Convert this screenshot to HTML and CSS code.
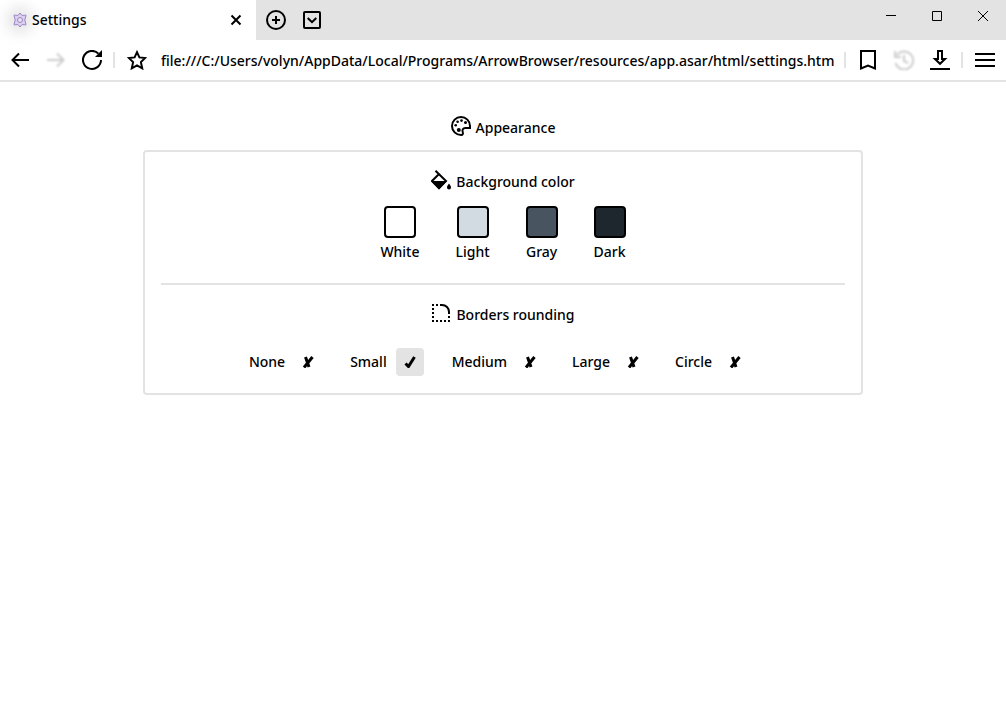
FILE: index.html
```
<!DOCTYPE html>
<html lang="en">
<head>
<meta charset="utf-8">
<title>Settings</title>
<link rel="stylesheet" href="styles.css">
</head>
<body>
<header class="titlebar">
  <div class="tab">
    <svg class="favicon" viewBox="0 0 16 16"><path d="M8 1l2 2.400 4.200-.4-1.400 5 1.400 5-4.200-.4L8 15l-2-2.400-4.200.4 1.400-5-1.400-5 4.200.400z" fill="#dcd0f0" stroke="#9c86c0"/><circle cx="8" cy="8" r="2.500" fill="#e6e0f2" stroke="#9c86c0"/></svg>
    <span class="tab-title">Settings</span>
    <button class="tab-close" aria-label="Close tab"><svg viewBox="0 0 20 20"><path d="M5.500 5.500l9 9M14.500 5.500l-9 9"/></svg></button>
  </div>
  <button class="strip-btn" aria-label="New tab"><svg viewBox="0 0 20 20"><circle cx="10" cy="10" r="9"/><path d="M10 6v8M6 10h8"/></svg></button>
  <button class="strip-btn" aria-label="Tab list"><svg viewBox="0 0 20 20"><rect x="2" y="2" width="16" height="16" rx="1"/><path d="M5.700 8l4.300 4.200L14.300 8"/></svg></button>
  <div class="window-controls">
    <button class="win-btn" aria-label="Minimize"><svg viewBox="0 0 10 10"><path d="M0 4.500h10"/></svg></button>
    <button class="win-btn" aria-label="Maximize"><svg viewBox="0 0 10 10"><path d="M.5.5h9v9h-9z"/></svg></button>
    <button class="win-btn" aria-label="Close"><svg viewBox="0 0 10 10"><path d="M0 0l10 10M10 0L0 10"/></svg></button>
  </div>
</header>
<nav class="toolbar">
  <button class="icon-btn" aria-label="Back"><svg viewBox="0 0 20 20"><path d="M19 10H3M9 3.500L2.500 10 9 16.500"/></svg></button>
  <button class="icon-btn" aria-label="Forward" disabled><svg viewBox="0 0 20 20"><path d="M1 10h16M11 3.500l6.500 6.500-6.500 6.500"/></svg></button>
  <button class="icon-btn" aria-label="Reload"><svg viewBox="0 0 20 20"><path d="M16.400 3.600A9 9 0 1 0 19 10"/><path class="solid" d="M20 0v7h-7z"/></svg></button>
  <span class="separator"></span>
  <button class="icon-btn" aria-label="Add bookmark"><svg viewBox="0 0 20 20"><path d="M10 2.200l2.400 5.200 5.600.7-4.100 4 1.300 6.200-5.200-3-5.200 3 1.300-6.200L2 8.100l5.600-.7z"/></svg></button>
  <input class="address" type="text" aria-label="Address" value="file:///C:/Users/volyn/AppData/Local/Programs/ArrowBrowser/resources/app.asar/html/settings.html">
  <span class="separator"></span>
  <button class="icon-btn" aria-label="Bookmarks"><svg viewBox="0 0 20 20"><path d="M3 1h14v17.500l-7-3-7 3z"/></svg></button>
  <button class="icon-btn" aria-label="History" disabled><svg viewBox="0 0 20 20"><path d="M3 5a9 9 0 1 1-1.500 8M1 1v6h6M10 5v6l4 2"/></svg></button>
  <button class="icon-btn" aria-label="Downloads"><svg viewBox="0 0 20 20"><path d="M8 1h4v8h3l-5 4.800L5 9h3zM0 19h20"/></svg></button>
  <span class="separator"></span>
  <button class="icon-btn" aria-label="Menu"><svg viewBox="0 0 20 20"><path d="M0 4h20M0 10h20M0 16h20"/></svg></button>
</nav>
<main class="page">
  <h1 class="heading"><svg viewBox="0 0 20 20"><path d="M10 1a9 9 0 1 0 0 18c2 0 2.200-1.600 1.700-3-.8-2.200.3-4 2.600-4H19V10c0-5-4-9-9-9z"/><g class="solid"><circle cx="4.700" cy="9.300" r="1.300"/><circle cx="6.600" cy="5.800" r="1.300"/><circle cx="10.500" cy="4.600" r="1.300"/><circle cx="14.500" cy="6.500" r="1.500"/><circle cx="7.800" cy="14" r="2"/></g></svg>Appearance</h1>
  <section class="card">
    <h2 class="heading"><svg viewBox="0 0 20 20"><path d="M4.500.700L15 11l-7 7-7-7 7-7"/><path class="solid" d="M0 11h16l-8 8.400zM18 13.500c1.300 1.800 2 2.800 2 4a2 2 0 0 1-4 0c0-1.200.7-2.200 2-4z"/></svg>Background color</h2>
    <div class="swatches">
      <button class="swatch"><span class="chip white"></span>White</button>
      <button class="swatch"><span class="chip light"></span>Light</button>
      <button class="swatch"><span class="chip gray"></span>Gray</button>
      <button class="swatch"><span class="chip dark"></span>Dark</button>
    </div>
    <hr class="divider">
    <h2 class="heading"><svg viewBox="0 0 20 20"><path d="M9 2h2c4 0 7 3 7 7v2"/><path class="solid" d="M1 1h2v2H1zM5 1h2v2H5zM1 5h2v2H1zM1 9h2v2H1zM1 13h2v2H1zM1 17h2v2H1zM5 17h2v2H5zM9 17h2v2H9zM13 17h2v2h-2zM17 17h2v2h-2zM17 13h2v2h-2z"/></svg>Borders rounding</h2>
    <div class="options">
      <label class="option">None<span class="mark"><input type="radio" name="rounding"><svg viewBox="0 0 12 12"><path d="M3.500 1l3.500 10M10.500 1L2 11.500"/></svg></span></label>
      <label class="option">Small<span class="mark"><input type="radio" name="rounding" checked><svg viewBox="0 0 12 12"><path d="M1.500 7.500L4.500 10.500 10.500 1"/></svg></span></label>
      <label class="option">Medium<span class="mark"><input type="radio" name="rounding"><svg viewBox="0 0 12 12"><path d="M3.500 1l3.500 10M10.500 1L2 11.500"/></svg></span></label>
      <label class="option">Large<span class="mark"><input type="radio" name="rounding"><svg viewBox="0 0 12 12"><path d="M3.500 1l3.500 10M10.500 1L2 11.500"/></svg></span></label>
      <label class="option">Circle<span class="mark"><input type="radio" name="rounding"><svg viewBox="0 0 12 12"><path d="M3.500 1l3.500 10M10.500 1L2 11.500"/></svg></span></label>
    </div>
  </section>
</main>
</body>
</html>
```
FILE: styles.css
```
* { box-sizing: border-box; }
body {
  margin: 0;
  background: #fff;
  color: #000;
  font: 500 14px/20px "Noto Sans", "Open Sans", sans-serif;
}
button, input { font: inherit; color: inherit; }
button { border: 0; padding: 0; background: none; }
svg {
  display: block;
  width: 20px;
  height: 20px;
  fill: none;
  stroke: #000;
  stroke-width: 2;
}
svg .solid { fill: #000; stroke: none; }

.titlebar { display: flex; height: 40px; background: #e3e3e3; }
.tab {
  display: flex;
  align-items: center;
  width: 256px;
  padding: 0 10px 0 12px;
  background: #fff;
}
.favicon {
  width: 16px;
  height: 16px;
  margin-right: 4px;
  stroke-width: 1;
  border-radius: 8px;
  box-shadow: 0 0 16px 4px #ddd;
  background: #eee;
}
.tab-title { flex: 1; }
.strip-btn { margin: 10px 6px 0 10px; width: 20px; height: 20px; }
.window-controls { display: flex; height: 32px; margin-left: auto; }
.win-btn { display: flex; width: 46px; align-items: center; justify-content: center; }
.win-btn svg { width: 10px; height: 10px; stroke-width: 1; }

.toolbar {
  display: flex;
  align-items: center;
  height: 42px;
  padding: 0 3px 0 2px;
  border-bottom: 2px solid #e3e3e3;
}
.icon-btn { flex: none; padding: 8px; }
.icon-btn:disabled svg { opacity: 0.2; filter: blur(1px); }
.separator { flex: none; width: 2px; height: 16px; margin: 0 4px 0 3px; background: #e3e3e3; }
.address {
  flex: 1;
  min-width: 0;
  height: 28px;
  margin: 0 7px 0 6px;
  border: 0;
  padding: 0;
  background: none;
  outline: 0;
}

.page { width: 720px; max-width: 100%; margin: 0 auto; padding-top: 34px; }
.heading {
  display: flex;
  justify-content: center;
  gap: 5px;
  margin: 0;
  font: inherit;
  line-height: 24px;
}
.card {
  margin-top: 10px;
  padding: 18px 16px 17px;
  border: 2px solid #e3e3e3;
  border-radius: 4px;
}
.swatches { display: flex; justify-content: center; gap: 28px; margin-top: 12px; }
.swatch { display: flex; flex-direction: column; align-items: center; gap: 4px; padding: 0 4px; }
.chip { width: 32px; height: 32px; border: 2px solid #000; border-radius: 4px; }
.white { background: #fff; }
.light { background: #d2dae2; }
.gray { background: #485460; }
.dark { background: #1e272e; }
.divider { height: 2px; margin: 21px 0 18px; border: 0; background: #e3e3e3; }
.options {
  display: flex;
  justify-content: center;
  gap: 28px;
  margin-top: 21px;
  padding-right: 8px;
}
.option { display: flex; align-items: center; gap: 9px; }
.mark { display: grid; place-items: center; }
.mark input, .mark svg { grid-area: 1 / 1; }
.mark input {
  appearance: none;
  width: 28px;
  height: 28px;
  margin: 0;
  border-radius: 4px;
}
.mark input:checked { background: #e3e3e3; }
.mark svg { width: 12px; height: 12px; stroke-width: 3; pointer-events: none; }
```
